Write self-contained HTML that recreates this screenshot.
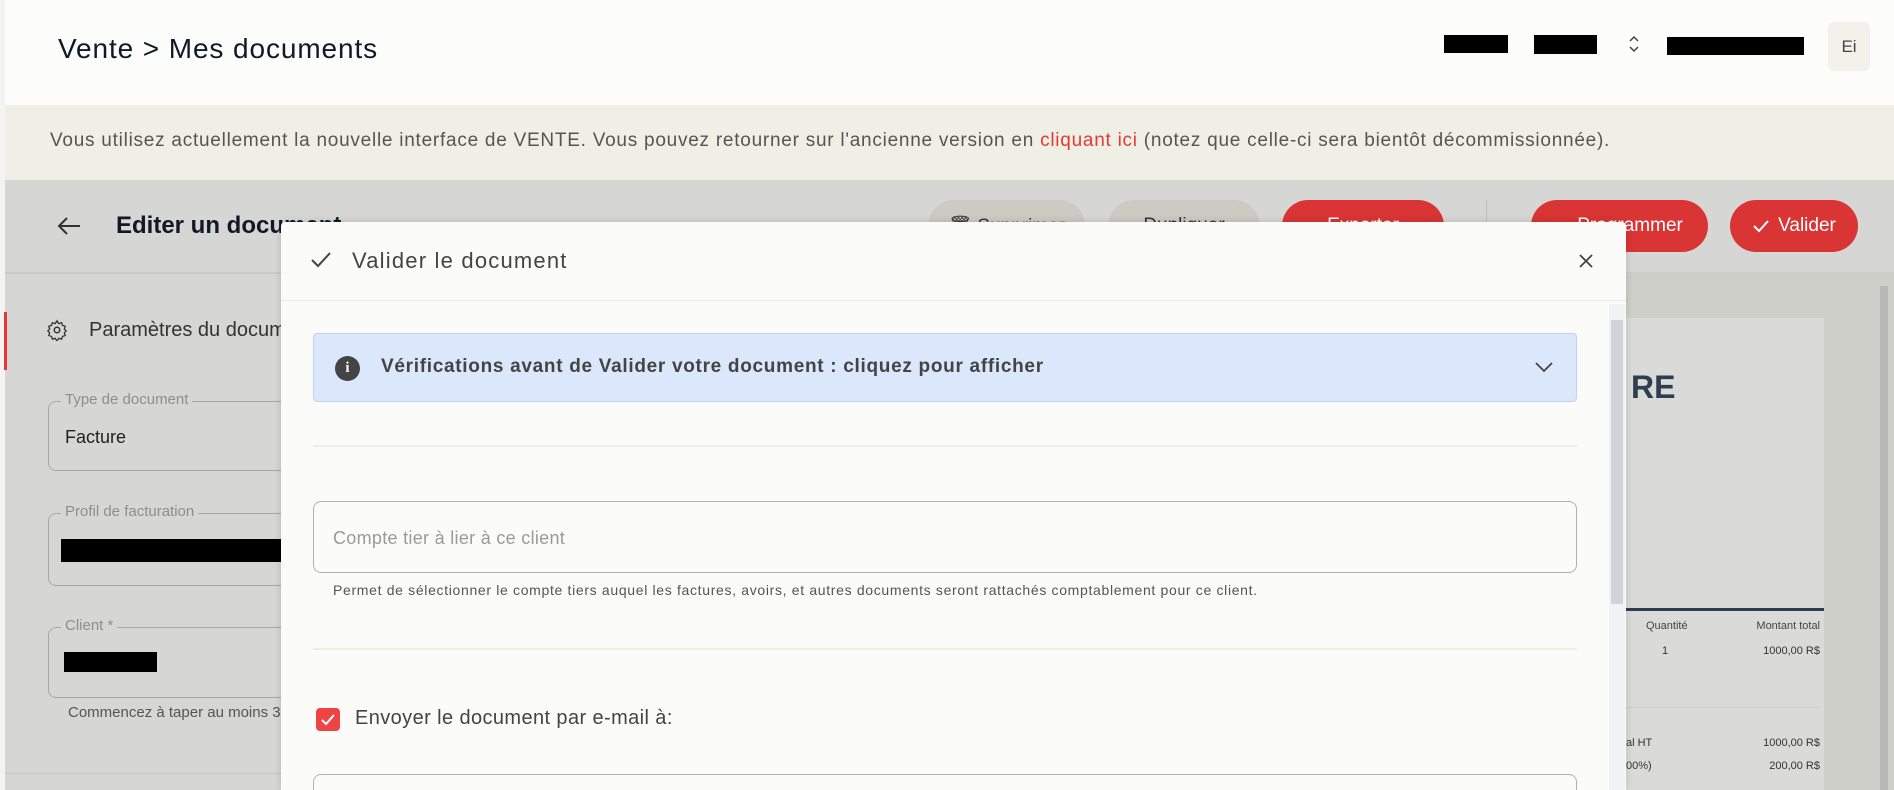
<!DOCTYPE html>
<html><head><meta charset="utf-8"><style>
*{margin:0;padding:0;box-sizing:border-box}
html{width:1894px;height:790px;overflow:hidden}
body{width:1894px;height:790px;overflow:hidden;position:relative;background:#d6d6d4;font-family:"Liberation Sans",sans-serif}
.a{position:absolute}
.blk{position:absolute;background:#000}
.pill{position:absolute;height:52px;border-radius:26px;color:#fff;font-size:19px;display:flex;align-items:center;justify-content:center;gap:8px}
.fld{position:absolute;border:1.5px solid #a9a9a4;border-radius:8px}
.lbl{position:absolute;top:-11px;left:12px;background:#d6d6d4;padding:0 4px;font-size:15px;color:#8e8e8a}
</style></head><body>
<!-- header -->
<div class="a" style="left:0;top:0;width:1894px;height:105px;background:#fcfcfa"></div>
<div class="a" style="left:0;top:0;width:5px;height:790px;background:#f4f4f2"></div>
<div class="a" style="left:58px;top:33px;font-size:28px;letter-spacing:0.9px;color:#111827">Vente &gt; Mes documents</div>
<div class="blk" style="left:1444px;top:35px;width:64px;height:18px"></div>
<div class="blk" style="left:1534px;top:35px;width:63px;height:19px"></div>
<svg class="a" style="left:1627px;top:33px" width="14" height="22" viewBox="0 0 14 22"><path d="M3 8l4-4 4 4M3 14l4 4 4-4" fill="none" stroke="#444" stroke-width="1.5"/></svg>
<div class="blk" style="left:1667px;top:37px;width:137px;height:18px"></div>
<div class="a" style="left:1828px;top:22px;width:42px;height:49px;background:#f2f1ea;border-radius:6px;font-size:17px;color:#444;display:flex;align-items:center;justify-content:center">Ei</div>
<!-- banner -->
<div class="a" style="left:5px;top:105px;width:1889px;height:75px;background:#f0efe6"></div>
<div class="a" style="left:50px;top:130px;font-size:19px;letter-spacing:0.75px;color:#555;white-space:nowrap">Vous utilisez actuellement la nouvelle interface de VENTE. Vous pouvez retourner sur l'ancienne version en <span style="color:#e53935">cliquant ici</span> (notez que celle-ci sera bientôt décommissionnée).</div>
<!-- toolbar -->
<div class="a" style="left:5px;top:272px;width:1889px;height:2px;background:#cacac6"></div>
<svg class="a" style="left:56px;top:215px" width="26" height="22" viewBox="0 0 26 22"><path d="M24 11H3M11 3L3 11l8 8" fill="none" stroke="#333" stroke-width="2"/></svg>
<div class="a" style="left:116px;top:212px;font-size:24px;font-weight:bold;color:#111827">Editer un document</div>
<div class="pill" style="left:928px;top:200px;width:157px;background:#cbcac3;color:#333">🗑 Supprimer</div>
<div class="pill" style="left:1108px;top:200px;width:152px;background:#cbcac3;color:#333">Dupliquer</div>
<div class="pill" style="left:1282px;top:200px;width:162px;background:#d93535">Exporter</div>
<div class="a" style="left:1486px;top:200px;width:1px;height:52px;background:#bdbdb8"></div>
<div class="pill" style="left:1531px;top:200px;width:177px;background:#d93535">&nbsp;&nbsp;&nbsp;&nbsp;Programmer</div>
<div class="pill" style="left:1730px;top:200px;width:128px;background:#d93535"><svg width="18" height="16" viewBox="0 0 18 16"><path d="M2 8l5 5L16 3" fill="none" stroke="#fff" stroke-width="2"/></svg>Valider</div>
<!-- left panel -->
<div class="a" style="left:4px;top:312px;width:3px;height:58px;background:#e53935"></div>
<svg class="a" style="left:46px;top:319px" width="22" height="22" viewBox="0 0 24 24"><circle cx="12" cy="12" r="3" fill="none" stroke="#333" stroke-width="1.6"/><path d="M12 2l2 3 3-1 1 3 3 1-1 3 2 2-2 2 1 3-3 1-1 3-3-1-2 3-2-3-3 1-1-3-3-1 1-3-2-2 2-2-1-3 3-1 1-3 3 1z" fill="none" stroke="#333" stroke-width="1.4"/></svg>
<div class="a" style="left:89px;top:319px;font-size:20px;color:#333">Paramètres du document</div>
<div class="fld" style="left:48px;top:401px;width:300px;height:70px"><div class="lbl">Type de document</div><div class="a" style="left:16px;top:25px;font-size:18px;color:#222">Facture</div></div>
<div class="fld" style="left:48px;top:513px;width:300px;height:73px"><div class="lbl">Profil de facturation</div></div>
<div class="blk" style="left:61px;top:539px;width:222px;height:23px"></div>
<div class="fld" style="left:48px;top:627px;width:300px;height:71px"><div class="lbl">Client *</div></div>
<div class="blk" style="left:64px;top:652px;width:93px;height:20px"></div>
<div class="a" style="left:68px;top:704px;font-size:15px;color:#555">Commencez à taper au moins 3 caractères</div>
<div class="a" style="left:5px;top:773px;width:300px;height:1px;background:#c6c6c2"></div>
<!-- right preview -->
<div class="a" style="left:1626px;top:273px;width:268px;height:517px;background:#cfcfca"></div>
<div class="a" style="left:1626px;top:318px;width:198px;height:472px;background:#dadad8"></div>
<div class="a" style="left:1631px;top:369px;font-size:32px;font-weight:bold;color:#2c3e50">RE</div>
<div class="a" style="left:1626px;top:608px;width:198px;height:3px;background:#2c3e50"></div>
<div class="a" style="left:1646px;top:620px;font-size:11px;color:#444">Quantité</div>
<div class="a" style="left:1730px;top:620px;width:90px;text-align:right;font-size:11px;color:#444">Montant total</div>
<div class="a" style="left:1662px;top:645px;font-size:11px;color:#333">1</div>
<div class="a" style="left:1730px;top:645px;width:90px;text-align:right;font-size:11px;color:#333">1000,00 R$</div>
<div class="a" style="left:1626px;top:707px;width:194px;height:1px;background:#cdcdca"></div>
<div class="a" style="left:1626px;top:737px;font-size:11px;color:#333">al HT</div>
<div class="a" style="left:1730px;top:737px;width:90px;text-align:right;font-size:11px;color:#333">1000,00 R$</div>
<div class="a" style="left:1626px;top:760px;font-size:11px;color:#333">00%)</div>
<div class="a" style="left:1730px;top:760px;width:90px;text-align:right;font-size:11px;color:#333">200,00 R$</div>
<div class="a" style="left:1880px;top:286px;width:8px;height:504px;background:#b9b9b6"></div>
<!-- modal -->
<div class="a" style="left:281px;top:222px;width:1345px;height:568px;background:#fbfbf9;border-radius:4px 4px 0 0;box-shadow:0 0 8px rgba(0,0,0,.15)"></div>
<svg class="a" style="left:310px;top:250px" width="22" height="20" viewBox="0 0 22 20"><path d="M2 10l6 6L20 3" fill="none" stroke="#444" stroke-width="2"/></svg>
<div class="a" style="left:352px;top:248px;font-size:22px;letter-spacing:1.2px;color:#444">Valider le document</div>
<svg class="a" style="left:1578px;top:253px" width="16" height="16" viewBox="0 0 16 16"><path d="M2 2l12 12M14 2L2 14" stroke="#444" stroke-width="1.8"/></svg>
<div class="a" style="left:281px;top:300px;width:1345px;height:1px;background:#ecebe3"></div>
<div class="a" style="left:1609px;top:304px;width:16px;height:486px;background:#f1f2f4"></div>
<div class="a" style="left:1611px;top:320px;width:12px;height:284px;background:#d0d3d9"></div>
<div class="a" style="left:313px;top:333px;width:1264px;height:69px;background:#dbe8fb;border:1.5px solid #bcd4f5;border-radius:4px"></div>
<div class="a" style="left:335px;top:356px;width:25px;height:25px;border-radius:50%;background:#444;color:#fff;font-size:15px;font-weight:bold;font-family:'Liberation Serif',serif;display:flex;align-items:center;justify-content:center">i</div>
<div class="a" style="left:381px;top:356px;font-size:19px;letter-spacing:0.7px;font-weight:bold;color:#444">Vérifications avant de Valider votre document : cliquez pour afficher</div>
<svg class="a" style="left:1534px;top:360px" width="20" height="14" viewBox="0 0 20 14"><path d="M2 3l8 8 8-8" fill="none" stroke="#444" stroke-width="1.8"/></svg>
<div class="a" style="left:313px;top:445px;width:1264px;height:2px;background:#efeee4"></div>
<div class="a" style="left:313px;top:501px;width:1264px;height:72px;border:1.5px solid #b1b1ac;border-radius:8px"></div>
<div class="a" style="left:333px;top:528px;font-size:18px;letter-spacing:0.3px;color:#9a9a96">Compte tier à lier à ce client</div>
<div class="a" style="left:333px;top:582px;font-size:14px;letter-spacing:0.67px;color:#555;white-space:nowrap">Permet de sélectionner le compte tiers auquel les factures, avoirs, et autres documents seront rattachés comptablement pour ce client.</div>
<div class="a" style="left:313px;top:648px;width:1264px;height:2px;background:#efeee4"></div>
<div class="a" style="left:316px;top:708px;width:24px;height:23px;background:#ef4444;border-radius:4px"></div>
<svg class="a" style="left:320px;top:712px" width="16" height="15" viewBox="0 0 16 15"><path d="M2 8l4 4 8-9" fill="none" stroke="#fff" stroke-width="2"/></svg>
<div class="a" style="left:355px;top:707px;font-size:20px;letter-spacing:0.4px;color:#444">Envoyer le document par e-mail à:</div>
<div class="a" style="left:313px;top:774px;width:1264px;height:16px;border:1.5px solid #b1b1ac;border-bottom:none;border-radius:8px 8px 0 0"></div>
</body></html>
